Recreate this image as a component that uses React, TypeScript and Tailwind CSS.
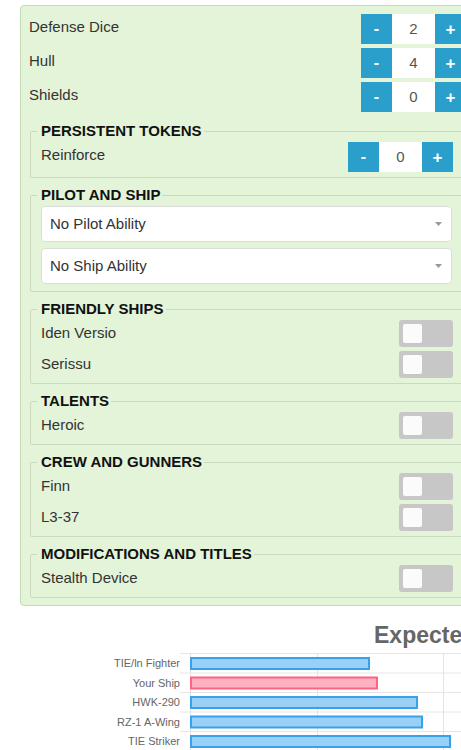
import React from 'react';

const Stepper: React.FC<{ value: number }> = ({ value }) => (
  <div className="flex h-[30px] shrink-0">
    <button className="w-[31px] bg-[#2a9fcc] text-white font-bold text-[16px] leading-none">-</button>
    <div className="w-[43px] bg-white flex items-center justify-center text-[15px] text-[#555]">{value}</div>
    <button className="w-[31px] bg-[#2a9fcc] text-white font-bold text-[17px] leading-none">+</button>
  </div>
);

const Toggle: React.FC = () => (
  <div className="w-[54px] h-[27px] rounded-[3px] bg-[#c7c7c7] flex items-center pl-[4px] shrink-0">
    <div className="w-[19px] h-[19px] rounded-[2px] bg-[#fbfbfb]" />
  </div>
);

const StepRow: React.FC<{ label: string; value: number }> = ({ label, value }) => (
  <div className="flex items-start justify-between">
    <span className="pt-[3px] leading-[20px] text-[15px] text-[#333]">{label}</span>
    <Stepper value={value} />
  </div>
);

const ToggleRow: React.FC<{ label: string }> = ({ label }) => (
  <div className="flex items-center justify-between h-[27px]">
    <span className="text-[15px] text-[#333]">{label}</span>
    <Toggle />
  </div>
);

const Group: React.FC<{ title: string; first?: boolean; pb?: string; children: React.ReactNode }> = ({ title, first, children }) => (
  <fieldset
    className={`${first ? 'mt-[10px]' : 'mt-[8px]'} ml-[1px] mr-[3px] border border-[#cbd9c1] rounded-[2px] pl-[10px] pr-[9px] pb-[5px]`}
  >
    <legend className="-ml-[4px] pl-[4px] pr-[2px] text-[15px] leading-[18px] font-bold text-[#111]">{title}</legend>
    <div className="mt-[2px] flex flex-col gap-[4px]">{children}</div>
  </fieldset>
);

const Select: React.FC<{ label: string }> = ({ label }) => (
  <div className="h-[36px] bg-white border border-[#dcdcdc] rounded-[4px] flex items-center justify-between pl-[8px] pr-[9px] mr-[1px]">
    <span className="text-[15px] text-[#333]">{label}</span>
    <svg width="7" height="4" viewBox="0 0 7 4">
      <path d="M0 0 L7 0 L3.5 4 Z" fill="#999" />
    </svg>
  </div>
);

const ships = [
  { name: 'TIE/ln Fighter', end: 370, mine: false },
  { name: 'Your Ship', end: 378, mine: true },
  { name: 'HWK-290', end: 418, mine: false },
  { name: 'RZ-1 A-Wing', end: 423, mine: false },
  { name: 'TIE Striker', end: 451, mine: false },
];

const Chart: React.FC = () => {
  const top = 47;
  const step = 19.5;
  return (
    <svg width="461" height="144" className="block">
      <text x="374" y="37" fontSize="23" fontWeight="bold" fill="#666" fontFamily="Liberation Sans, Arial, sans-serif">
        Expected Damage
      </text>
      {[0, 1, 2, 3, 4, 5].map((i) => (
        <line key={i} x1="180" x2="461" y1={top + i * step + 0.5} y2={top + i * step + 0.5} stroke="#e6e6e6" />
      ))}
      {[190, 317, 443].map((x) => (
        <line key={x} x1={x + 0.5} x2={x + 0.5} y1={top} y2="144" stroke="#e3e3e3" />
      ))}
      {ships.map((s, i) => {
        const y = top + i * step;
        return (
          <g key={s.name}>
            <text
              x="180"
              y={y + 14}
              textAnchor="end"
              fontSize="11"
              fill="#666"
              fontFamily="Liberation Sans, Arial, sans-serif"
            >
              {s.name}
            </text>
            <rect
              x="191"
              y={y + 5}
              width={s.end - 192}
              height="11"
              fill={s.mine ? '#ffb1c1' : '#9ad0f5'}
              stroke={s.mine ? '#ff6384' : '#36a2eb'}
              strokeWidth="2"
            />
          </g>
        );
      })}
    </svg>
  );
};

export default function App() {
  return (
    <div className="w-[461px] h-[750px] overflow-hidden bg-white font-['Liberation_Sans',Arial,sans-serif]">
      <div className="pt-[5px] pl-[20px]">
        <div className="w-[455px] bg-[#e3f4d9] border border-[#c4dcb5] rounded-[4px] pt-[8px] pb-[7px] pl-[8px] pr-[8px]">
          <div className="flex flex-col gap-[4px]">
            <StepRow label="Defense Dice" value={2} />
            <StepRow label="Hull" value={4} />
            <StepRow label="Shields" value={0} />
          </div>

          <Group title="PERSISTENT TOKENS" first>
            <StepRow label="Reinforce" value={0} />
          </Group>

          <fieldset className="mt-[8px] ml-[1px] mr-[3px] border border-[#cbd9c1] rounded-[2px] pl-[10px] pr-[9px] pb-[7px]">
            <legend className="-ml-[4px] pl-[4px] pr-[2px] text-[15px] leading-[18px] font-bold text-[#111]">PILOT AND SHIP</legend>
            <div className="mt-[2px] flex flex-col gap-[6px]">
              <Select label="No Pilot Ability" />
              <Select label="No Ship Ability" />
            </div>
          </fieldset>

          <Group title="FRIENDLY SHIPS">
            <ToggleRow label="Iden Versio" />
            <ToggleRow label="Serissu" />
          </Group>

          <Group title="TALENTS">
            <ToggleRow label="Heroic" />
          </Group>

          <Group title="CREW AND GUNNERS">
            <ToggleRow label="Finn" />
            <ToggleRow label="L3-37" />
          </Group>

          <Group title="MODIFICATIONS AND TITLES">
            <ToggleRow label="Stealth Device" />
          </Group>
        </div>
      </div>
      <Chart />
    </div>
  );
}
